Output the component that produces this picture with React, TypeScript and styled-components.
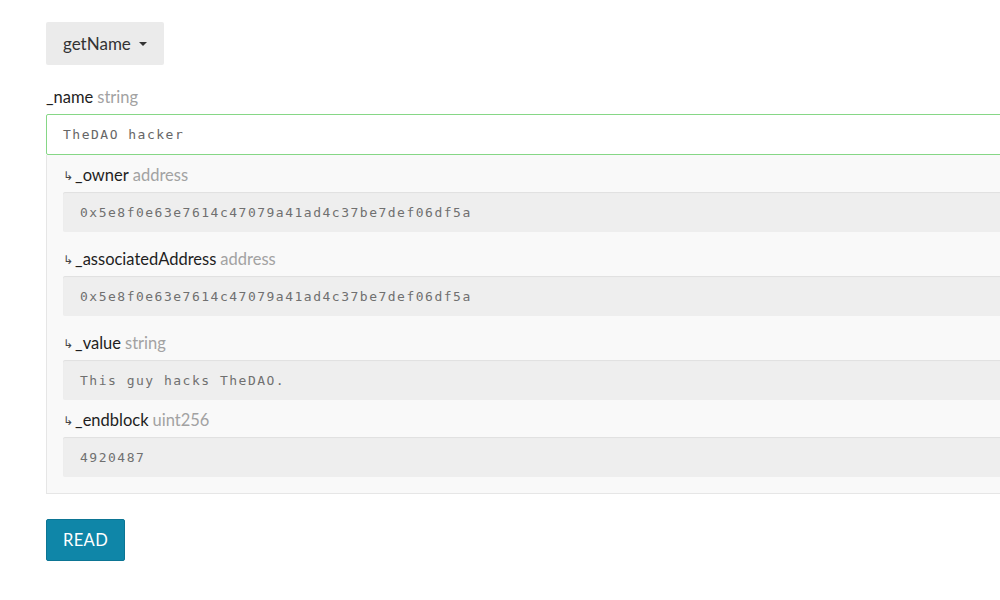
import React from "react";
import styled, { createGlobalStyle } from "styled-components";

const Global = createGlobalStyle`
  html, body { margin: 0; padding: 0; background: #fff; overflow: hidden; }
  body { font-family: Lato, "Open Sans", "DejaVu Sans", sans-serif; color: #333; }
`;

const Page = styled.div`
  width: 1200px;
  padding: 22px 0 0 46px;
  display: flex;
  flex-direction: column;
  align-items: flex-start;
`;

const DropButton = styled.button`
  height: 43px;
  width: 118px;
  padding: 0 17px;
  border: none;
  border-radius: 2px;
  background: #ebebeb;
  color: #333;
  font-family: Lato, sans-serif;
  font-size: 17px;
  display: flex;
  align-items: center;
  gap: 8px;
  cursor: pointer;
`;

const Caret = styled.span`
  width: 0;
  height: 0;
  border-left: 4px solid transparent;
  border-right: 4px solid transparent;
  border-top: 4px solid #333;
  margin-top: 1px;
`;

const Label = styled.div<{ $gap?: number }>`
  font-size: 16.5px;
  height: 20px;
  line-height: 20px;
  margin-top: ${(p) => p.$gap ?? 0}px;
  margin-bottom: 7px;
  display: flex;
  align-items: center;
  gap: 4px;
  white-space: nowrap;
`;

const Name = styled.span`
  color: #1e1e1e;
  display: flex;
  align-items: center;
`;

const Type = styled.span`
  color: #a2a2a2;
`;

const Arrow = styled.span`
  font-family: "DejaVu Sans", sans-serif;
  font-size: 12px;
  line-height: 1;
  color: #444;
  margin-right: 2px;
  margin-top: 2px;
`;

const Group = styled.div`
  width: 1100px;
  display: flex;
  flex-direction: column;
`;

const MainInput = styled.div`
  height: 41px;
  box-sizing: border-box;
  border: 1px solid #86d786;
  border-radius: 2px;
  background: #fff;
  padding: 0 16px;
  display: flex;
  align-items: center;
  font-family: "DejaVu Sans Mono", monospace;
  font-size: 13px;
  color: #666;
  letter-spacing: 1.5px;
`;

const Panel = styled.div`
  background: #f9f9f9;
  border: 1px solid #e6e6e6;
  border-top: none;
  padding: 10px 16px 16px;
  display: flex;
  flex-direction: column;
`;

const Field = styled.div<{ $after: number }>`
  height: 40px;
  box-sizing: border-box;
  background: #eeeeee;
  border-radius: 2px;
  box-shadow: inset 0 1px 1px rgba(0, 0, 0, 0.06);
  padding: 0 17px;
  display: flex;
  align-items: center;
  font-family: "DejaVu Sans Mono", monospace;
  font-size: 13px;
  color: #707070;
  letter-spacing: 1.5px;
  margin-bottom: ${(p) => p.$after}px;
`;

const ReadButton = styled.button`
  margin-top: 25px;
  width: 79px;
  height: 42px;
  border: 1px solid #0c7594;
  border-radius: 2px;
  background: #0f86a8;
  color: #fff;
  font-family: Lato, sans-serif;
  font-size: 16.5px;
  letter-spacing: 0.4px;
  cursor: pointer;
`;

const outputs = [
  { name: "_owner", type: "address", value: "0x5e8f0e63e7614c47079a41ad4c37be7def06df5a", after: 17 },
  { name: "_associatedAddress", type: "address", value: "0x5e8f0e63e7614c47079a41ad4c37be7def06df5a", after: 17 },
  { name: "_value", type: "string", value: "This guy hacks TheDAO.", after: 10 },
  { name: "_endblock", type: "uint256", value: "4920487", after: 0 },
];

export default function App() {
  return (
    <>
      <Global />
      <Page>
        <DropButton>
          getName <Caret />
        </DropButton>
        <Label $gap={22}>
          <Name>_name</Name>
          <Type>string</Type>
        </Label>
        <Group>
          <MainInput>TheDAO hacker</MainInput>
          <Panel>
            {outputs.map((o) => (
              <React.Fragment key={o.name}>
                <Label>
                  <Name>
                    <Arrow>↳</Arrow>
                    {o.name}
                  </Name>
                  <Type>{o.type}</Type>
                </Label>
                <Field $after={o.after}>{o.value}</Field>
              </React.Fragment>
            ))}
          </Panel>
        </Group>
        <ReadButton>READ</ReadButton>
      </Page>
    </>
  );
}
